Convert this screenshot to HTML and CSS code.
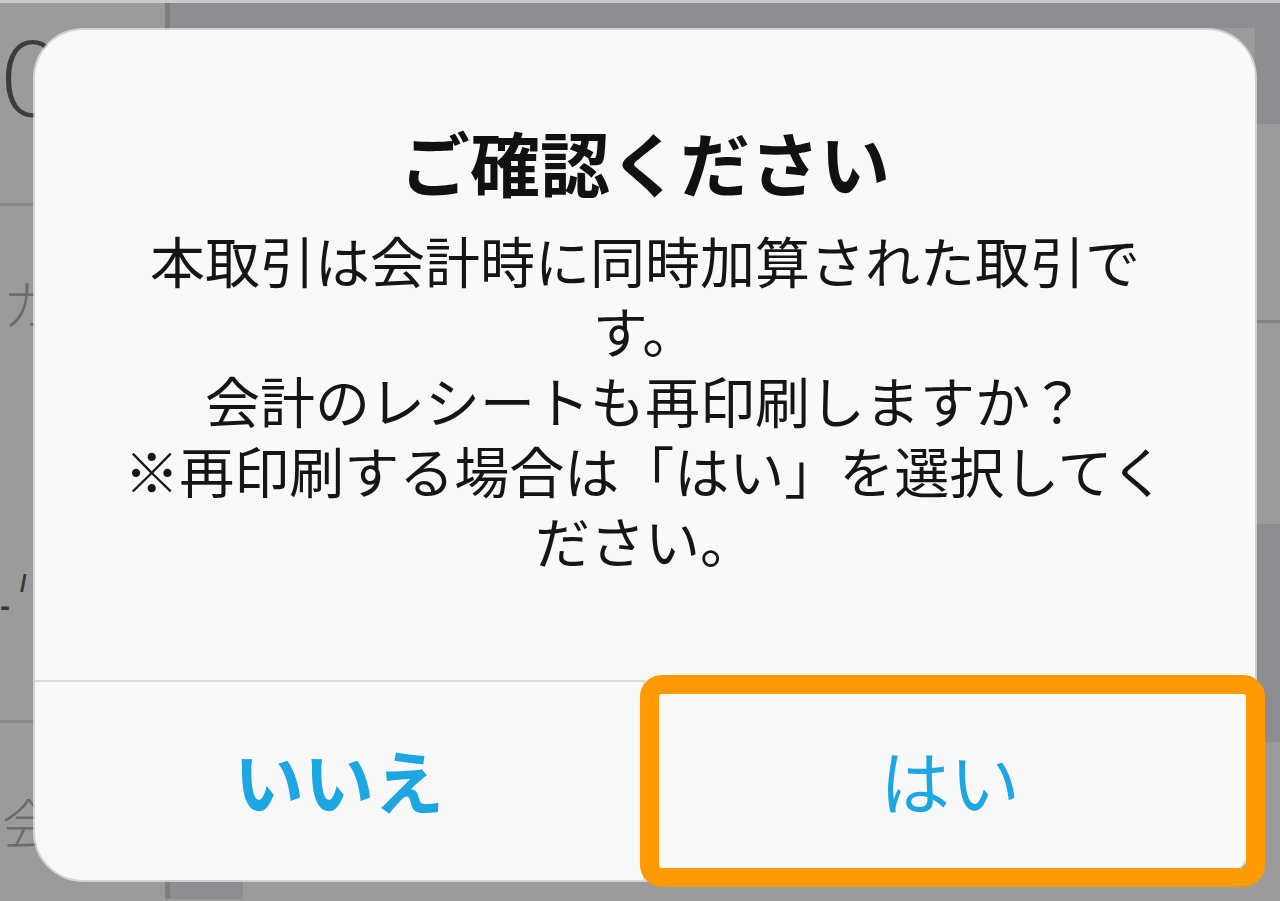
FILE: index.html
```html
<!DOCTYPE html>
<html lang="ja">
<head>
  <meta charset="UTF-8">
  <meta name="viewport" content="width=device-width, initial-scale=1.0">
  <title>ご確認ください</title>
  <link rel="stylesheet" href="styles.css">
</head>
<body>

<!-- screen behind the alert -->
<div class="backdrop">
  <div class="col col-left">
    <div class="cell cell-top"><span class="big-num">0</span></div>
    <div class="cell cell-mid">
      <span class="side-label">カ</span>
      <span class="side-mark">-</span>
      <span class="side-slash">/</span>
    </div>
    <div class="cell cell-bottom"><span class="side-label">会</span></div>
  </div>
  <div class="col col-center">
    <div class="strip strip-head"></div>
    <div class="strip strip-body"></div>
    <div class="strip strip-foot">
      <div class="foot-dark"></div>
      <div class="foot-light"></div>
    </div>
  </div>
  <div class="col col-right">
    <div class="edge edge-dark" style="height: 121px"></div>
    <div class="edge edge-light edge-line" style="height: 196px"></div>
    <div class="edge edge-light" style="height: 201px"></div>
    <div class="edge edge-dark" style="height: 218px"></div>
    <div class="edge edge-light" style="flex: 1"></div>
  </div>
</div>

<!-- alert -->
<div class="alert">
  <div class="alert-content">
    <h1 class="alert-title">ご確認ください</h1>
    <p class="alert-message">本取引は会計時に同時加算された取引です。<br>会計のレシートも再印刷しますか？<br>※再印刷する場合は「はい」を選択してください。</p>
  </div>
  <div class="alert-actions">
    <button type="button" class="alert-btn alert-btn-cancel">いいえ</button>
    <button type="button" class="alert-btn">はい</button>
  </div>
</div>

<div class="highlight"></div>

</body>
</html>
```

FILE: styles.css
```css
html, body {
  margin: 0;
  height: 100%;
}
body {
  font-family: "Noto Sans CJK JP", "Noto Sans", sans-serif;
  background-color: #9b9b9b;
  color: #1a1a1a;
  overflow: hidden;
}

/* Background screen */
.backdrop {
  display: flex;
  height: 899px;
  border-top: 3px solid #c9c9cb;
  box-sizing: border-box;
}
.col {
  display: flex;
  flex-direction: column;
}
.col-left {
  width: 170px;
  border-right: 5px solid #7f7f81;
  box-sizing: border-box;
}
.col-center {
  flex: 1;
}
.col-right {
  width: 25px;
}
.cell {
  position: relative;
  overflow: hidden;
}
.cell-top {
  height: 200px;
  border-bottom: 3px solid #8a8a8a;
}
.cell-mid {
  height: 514px;
  border-bottom: 3px solid #8a8a8a;
}
.cell-bottom {
  flex: 1;
}
.big-num {
  position: absolute;
  left: 2px;
  top: 20px;
  font-family: "Lato", "Liberation Sans", sans-serif;
  font-weight: 300;
  font-size: 106px;
  line-height: 1;
  color: #3c3c3c;
}
.side-label {
  position: absolute;
  left: 2px;
  top: 70px;
  font-size: 54px;
  line-height: 1;
  font-weight: 300;
  color: #6c6c6c;
}
.cell-bottom .side-label {
  top: 72px;
}
.side-mark {
  position: absolute;
  left: 0;
  top: 385px;
  font-family: "Liberation Sans", sans-serif;
  font-size: 30px;
  line-height: 1;
  font-weight: bold;
  color: #3a3a3a;
}
.side-slash {
  position: absolute;
  left: 20px;
  top: 366px;
  font-family: "Liberation Sans", sans-serif;
  font-size: 24px;
  line-height: 1;
  font-weight: bold;
  color: #3a3a3a;
}
.strip-head {
  height: 25px;
  background-color: #8e8d92;
}
.strip-body {
  flex: 1;
}
.strip-foot {
  display: flex;
  height: 19px;
}
.foot-dark {
  width: 73px;
  background-color: #8e8d92;
}
.foot-light {
  flex: 1;
}
.edge-dark {
  background-color: #8e8d92;
}
.edge-line {
  border-bottom: 3px solid #858589;
}

/* Alert */
.alert {
  position: absolute;
  left: 35px;
  top: 30px;
  width: 1220px;
  height: 850px;
  display: flex;
  flex-direction: column;
  background-color: #f9f9f9;
  border-radius: 48px;
  box-shadow: 0 0 0 2px rgba(235, 235, 235, 0.7);
  overflow: hidden;
}
.alert-content {
  height: 652px;
  box-sizing: border-box;
  padding: 92px 80px 0;
  text-align: center;
  border-bottom: 2px solid #dcdcdc;
}
.alert-title {
  margin: 0;
  font-size: 70px;
  line-height: 80px;
  font-weight: 700;
  color: #111;
}
.alert-message {
  margin: 22px 0 0;
  font-size: 55px;
  line-height: 70px;
  color: #151515;
}
.alert-actions {
  flex: 1;
  display: grid;
  grid-template-columns: 1fr 1fr;
}
.alert-btn {
  font-family: inherit;
  font-size: 70px;
  background: none;
  border: none;
  padding: 0 0 4px;
  color: #1da7e2;
  cursor: pointer;
}
.alert-btn-cancel {
  font-weight: 700;
  border-right: 2px solid #dcdcdc;
}

/* Orange highlight over the chosen button */
.highlight {
  position: absolute;
  left: 640px;
  top: 675px;
  width: 625px;
  height: 212px;
  box-sizing: border-box;
  border: 19px solid #ff9a00;
  border-radius: 22px;
}
```
